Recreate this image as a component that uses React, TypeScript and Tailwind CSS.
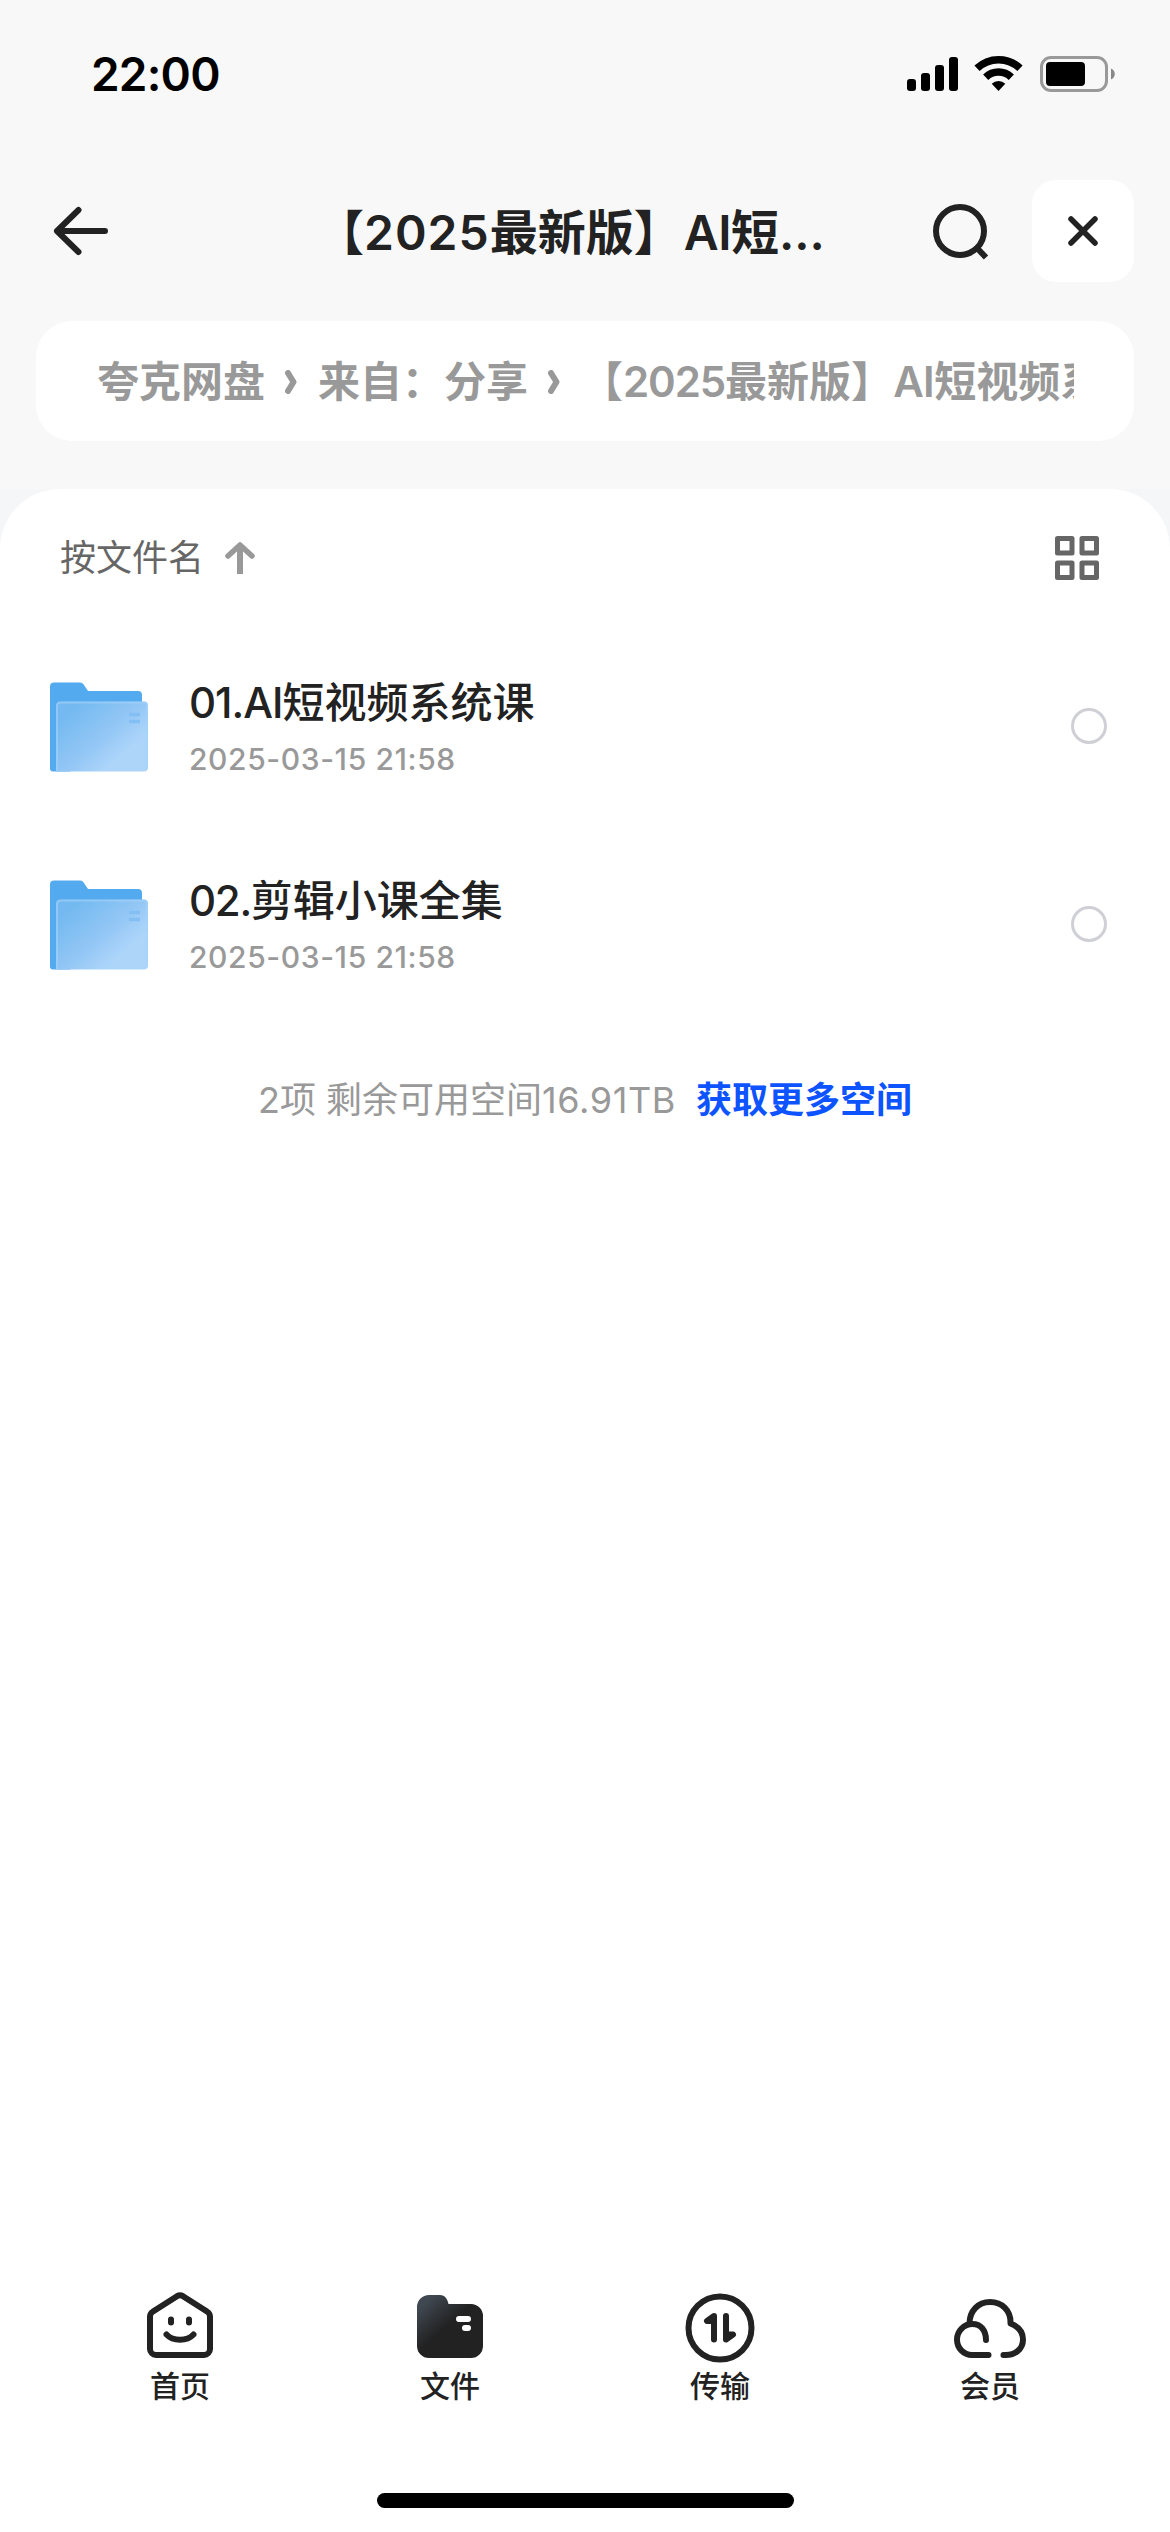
import type { ReactNode } from "react";

interface FileItem {
  name: ReactNode;
  date: string;
}

const files: FileItem[] = [
  {
    name: (
      <>
        <span className="tracking-[-1px]">01.AI</span>短视频系统课
      </>
    ),
    date: "2025-03-15 21:58",
  },
  {
    name: (
      <>
        <span className="tracking-[-1.3px]">02.</span>剪辑小课全集
      </>
    ),
    date: "2025-03-15 21:58",
  },
];

function StatusBar() {
  return (
    <div className="flex h-[148px] items-center justify-between pl-[91px] pr-[54px]">
      <span className="text-[46px] leading-none font-semibold tracking-[-0.8px] text-black">22:00</span>
      <svg width="210" height="40" viewBox="0 0 210 40">
        <rect x="1" y="25" width="9" height="12" rx="3" />
        <rect x="15" y="19" width="9" height="18" rx="3" />
        <rect x="29" y="11" width="9" height="26" rx="3" />
        <rect x="43" y="3" width="9" height="34" rx="3" />
        {/* wifi */}
        <g fill="none" stroke="#000" strokeWidth="7.5">
          <path d="M71 14.3a31 31 0 0 1 43 0" />
          <path d="M79.700 23.200a18.500 18.500 0 0 1 25.600 0" />
        </g>
        <path d="M92.500 37l-6.800-7.200a9.800 9.800 0 0 1 13.600 0z" />
        {/* battery */}
        <rect x="135.500" y="3.500" width="65" height="33" rx="9.500" fill="none" stroke="#999" strokeWidth="3" />
        <rect x="140" y="8" width="39" height="24" rx="4" />
        <path d="M205 14.500c5 2 5 9 0 11z" fill="#888" />
      </svg>
    </div>
  );
}

function Header() {
  return (
    <header className="flex h-[173px] items-start pl-[48px] pr-9 pt-8">
      <svg className="h-[102px] w-[66px]" viewBox="0 0 66 102" fill="none" stroke="#222" strokeWidth="6" strokeLinecap="round" strokeLinejoin="round">
        <path d="M57 51H9M30.500 30L9 51l21.500 21" />
      </svg>
      <h1 className="ml-[202px] flex h-[102px] w-[540px] items-center whitespace-nowrap pt-[3px] text-[48px] font-bold text-[#222]">
        <span>【</span>
        <span className="font-semibold tracking-[1px]">2025</span>
        <span>最新版】</span>
        <span className="ml-[2px] font-semibold tracking-[-0.5px]">AI</span>
        <span>短</span>
        <span className="font-semibold">...</span>
      </h1>
      <svg className="ml-[70px] h-[102px] w-[66px]" viewBox="0 0 66 102" fill="none" stroke="#222" strokeWidth="6">
        <circle cx="34" cy="51" r="24" />
        <path d="M50.500 67.500L60 77.500" />
      </svg>
      <button className="ml-auto flex size-[102px] items-center justify-center rounded-[24px] bg-white">
        <svg width="30" height="30" viewBox="0 0 30 30" stroke="#222" strokeWidth="5.500" strokeLinecap="round">
          <path d="M3 3l24 24M27 3L3 27" />
        </svg>
      </button>
    </header>
  );
}

function Chevron() {
  return (
    <svg className="mx-[20px] h-6 w-3 shrink-0" viewBox="0 0 12 24" fill="none" stroke="#999" strokeWidth="6" strokeLinecap="round" strokeLinejoin="round">
      <path d="M3 3l5.500 9L3 21" />
    </svg>
  );
}

function Breadcrumb() {
  return (
    <nav className="mx-9 h-[120px] rounded-[36px] bg-white pl-[61px] pr-[60px]">
      <div className="flex h-full items-center overflow-hidden whitespace-nowrap pt-px text-[42px] font-bold text-[#999]">
        <span>夸克网盘</span>
        <Chevron />
        <span className="ml-px">来自：分享</span>
        <Chevron />
        <span className="ml-px">【</span>
        <span className="font-semibold tracking-[-1.1px]">2025</span>
        <span>最新版】</span>
        <span className="font-semibold tracking-[-0.6px]">AI</span>
        <span>短视频系统课</span>
      </div>
    </nav>
  );
}

function FolderIcon() {
  return (
    <svg className="mt-[2px]" width="98" height="90" viewBox="0 0 98 90">
      <defs>
        <linearGradient id="folderFront" x1="0.1" y1="0.2" x2="0.85" y2="0.85">
          <stop offset="0" stopColor="#74baf0" />
          <stop offset="0.5" stopColor="#92c6f5" />
          <stop offset="0.85" stopColor="#add5fa" />
        </linearGradient>
      </defs>
      <path d="M0 4.500a4 4 0 0 1 4-4h26c2 0 3 1 4 2.500L38 9h50a4 4 0 0 1 4 4V40L20 89.500H3a3 3 0 0 1-3-3z" fill="#54aaee" />
      <path d="M6 23.500a4 4 0 0 1 4-4h84a4 4 0 0 1 4 4v62a4 4 0 0 1-4 4H6z" fill="url(#folderFront)" />
      <path d="M7 89V24a3.500 3.500 0 0 1 3.500-3.500H94a3 3 0 0 1 3 3V87" fill="none" stroke="#a5d2fa" strokeWidth="2" opacity="0.6" />
      <path d="M79 32.500h11M79 39.500h11" stroke="#84bff4" strokeWidth="3.500" />
    </svg>
  );
}

function FileRow({ file }: { file: FileItem }) {
  return (
    <li className="flex h-[198px] items-center pl-[50px] pr-[63px]">
      <FolderIcon />
      <div className="ml-[41px] flex-1 pt-[3px]">
        <p className="text-[42px] leading-[60px] font-medium text-[#222]">{file.name}</p>
        <p className="mt-[2px] text-[30px] leading-[48px] font-medium tracking-[0.6px] text-[#999]">{file.date}</p>
      </div>
      <span className="size-9 rounded-full border-[3px] border-[#cfcfd6]" />
    </li>
  );
}

function HomeIcon() {
  return (
    <svg width="72" height="72" viewBox="0 0 72 72" fill="none" stroke="#222" strokeWidth="6" strokeLinecap="round" strokeLinejoin="round">
      <path d="M33 7.200a6 6 0 0 1 6 0l24 15.300a6 6 0 0 1 3 5V60a6 6 0 0 1-6 6H12a6 6 0 0 1-6-6V27.500a6 6 0 0 1 3-5z" />
      <path d="M27 30.500v3M45 30.500v3M22.500 45.500c6.500 7 20.500 7 27 0" />
    </svg>
  );
}

function FilesIcon() {
  return (
    <svg width="72" height="72" viewBox="0 0 72 72">
      <defs>
        <linearGradient id="filesTab" x1="0.08" y1="0.16" x2="0.42" y2="0.52">
          <stop offset="0" stopColor="#3f4851" />
          <stop offset="1" stopColor="#222" />
        </linearGradient>
      </defs>
      <path d="M3 18A12 12 0 0 1 15 6h11c5 0 7.500 4 8.500 9H57a12 12 0 0 1 12 12v30a12 12 0 0 1-12 12H15A12 12 0 0 1 3 57z" fill="url(#filesTab)" />
      <path d="M45 30h9M51 39h3" stroke="#fff" strokeWidth="6" strokeLinecap="round" />
    </svg>
  );
}

function TransferIcon() {
  return (
    <svg className="overflow-visible" width="72" height="72" viewBox="0 0 72 72" fill="none" stroke="#222" strokeWidth="6" strokeLinecap="round" strokeLinejoin="round">
      <circle cx="36" cy="39" r="31.500" />
      <path d="M30 50.500V27l-7 5h7M42 27v23.500l7-5h-7" />
    </svg>
  );
}

function CloudIcon() {
  return (
    <svg className="overflow-visible" width="72" height="72" viewBox="0 0 72 72" fill="none" stroke="#222" strokeWidth="6" strokeLinecap="round" strokeLinejoin="round">
      <path d="M32 51C32 41 26.500 35 18.500 35C10 35 3 42 3 50.500S9.500 66 18 66h16.500" />
      <path d="M15.500 34.500C15.500 22 24 13 36 13s21 8.500 20.500 21.500C64 37.500 69 43 69 50.500C69 60 61 67 49.500 66" />
    </svg>
  );
}

const tabs = [
  { label: "首页", icon: <HomeIcon /> },
  { label: "文件", icon: <FilesIcon /> },
  { label: "传输", icon: <TransferIcon /> },
  { label: "会员", icon: <CloudIcon /> },
];

export default function App() {
  return (
    <div
      lang="zh-CN"
      className="flex h-[2532px] w-[1170px] flex-col overflow-hidden bg-[#f8f8f8] font-['Inter','Noto_Sans_CJK_SC',sans-serif]"
    >
      <StatusBar />
      <Header />
      <Breadcrumb />

      <div className="mt-12 flex flex-1 flex-col bg-[#f5f6f8]">
        <main className="flex flex-1 flex-col rounded-t-[60px] bg-white">
          <div className="flex h-[138px] items-center pl-[60px] pr-[71px]">
            <span className="text-[36px] leading-none text-[#666]">按文件名</span>
            <svg className="mb-[2px] ml-[21px]" width="32" height="36" viewBox="0 0 32 36" fill="none" stroke="#999" strokeWidth="6">
              <path d="M15 35V6" />
              <path d="M3 17L15 6l12 11" strokeLinecap="round" strokeLinejoin="round" strokeWidth="5.500" />
            </svg>
            <svg className="ml-auto" width="44" height="44" viewBox="0 0 44 44" fill="none" stroke="#666" strokeWidth="5" strokeLinejoin="round">
              <rect x="2.500" y="2.500" width="14.500" height="14.500" />
              <rect x="27" y="2.500" width="14.500" height="14.500" />
              <rect x="2.500" y="27" width="14.500" height="14.500" />
              <rect x="27" y="27" width="14.500" height="14.500" />
            </svg>
          </div>

          <ul>
            {files.map((file, i) => (
              <FileRow key={i} file={file} />
            ))}
          </ul>

          <div className="mt-[53px] flex h-12 items-center whitespace-nowrap pl-[258px] text-[36px] leading-none text-[#999]">
            <span>
              2项 剩余可用空间<span className="tracking-[0.6px]">16.91TB</span>
            </span>
            <a className="ml-[20px] font-bold text-[#0d53ff]">获取更多空间</a>
          </div>

          <nav className="mx-[45px] mt-auto grid h-[243px] grid-cols-4">
            {tabs.map((tab) => (
              <button key={tab.label} className="flex flex-col items-center">
                {tab.icon}
                <span className="mt-[9px] text-[30px] leading-[32px] font-medium text-[#222]">{tab.label}</span>
              </button>
            ))}
          </nav>
          <div className="-mt-[39px] mb-6 h-[15px] w-[417px] self-center rounded-full bg-black" />
        </main>
      </div>
    </div>
  );
}
